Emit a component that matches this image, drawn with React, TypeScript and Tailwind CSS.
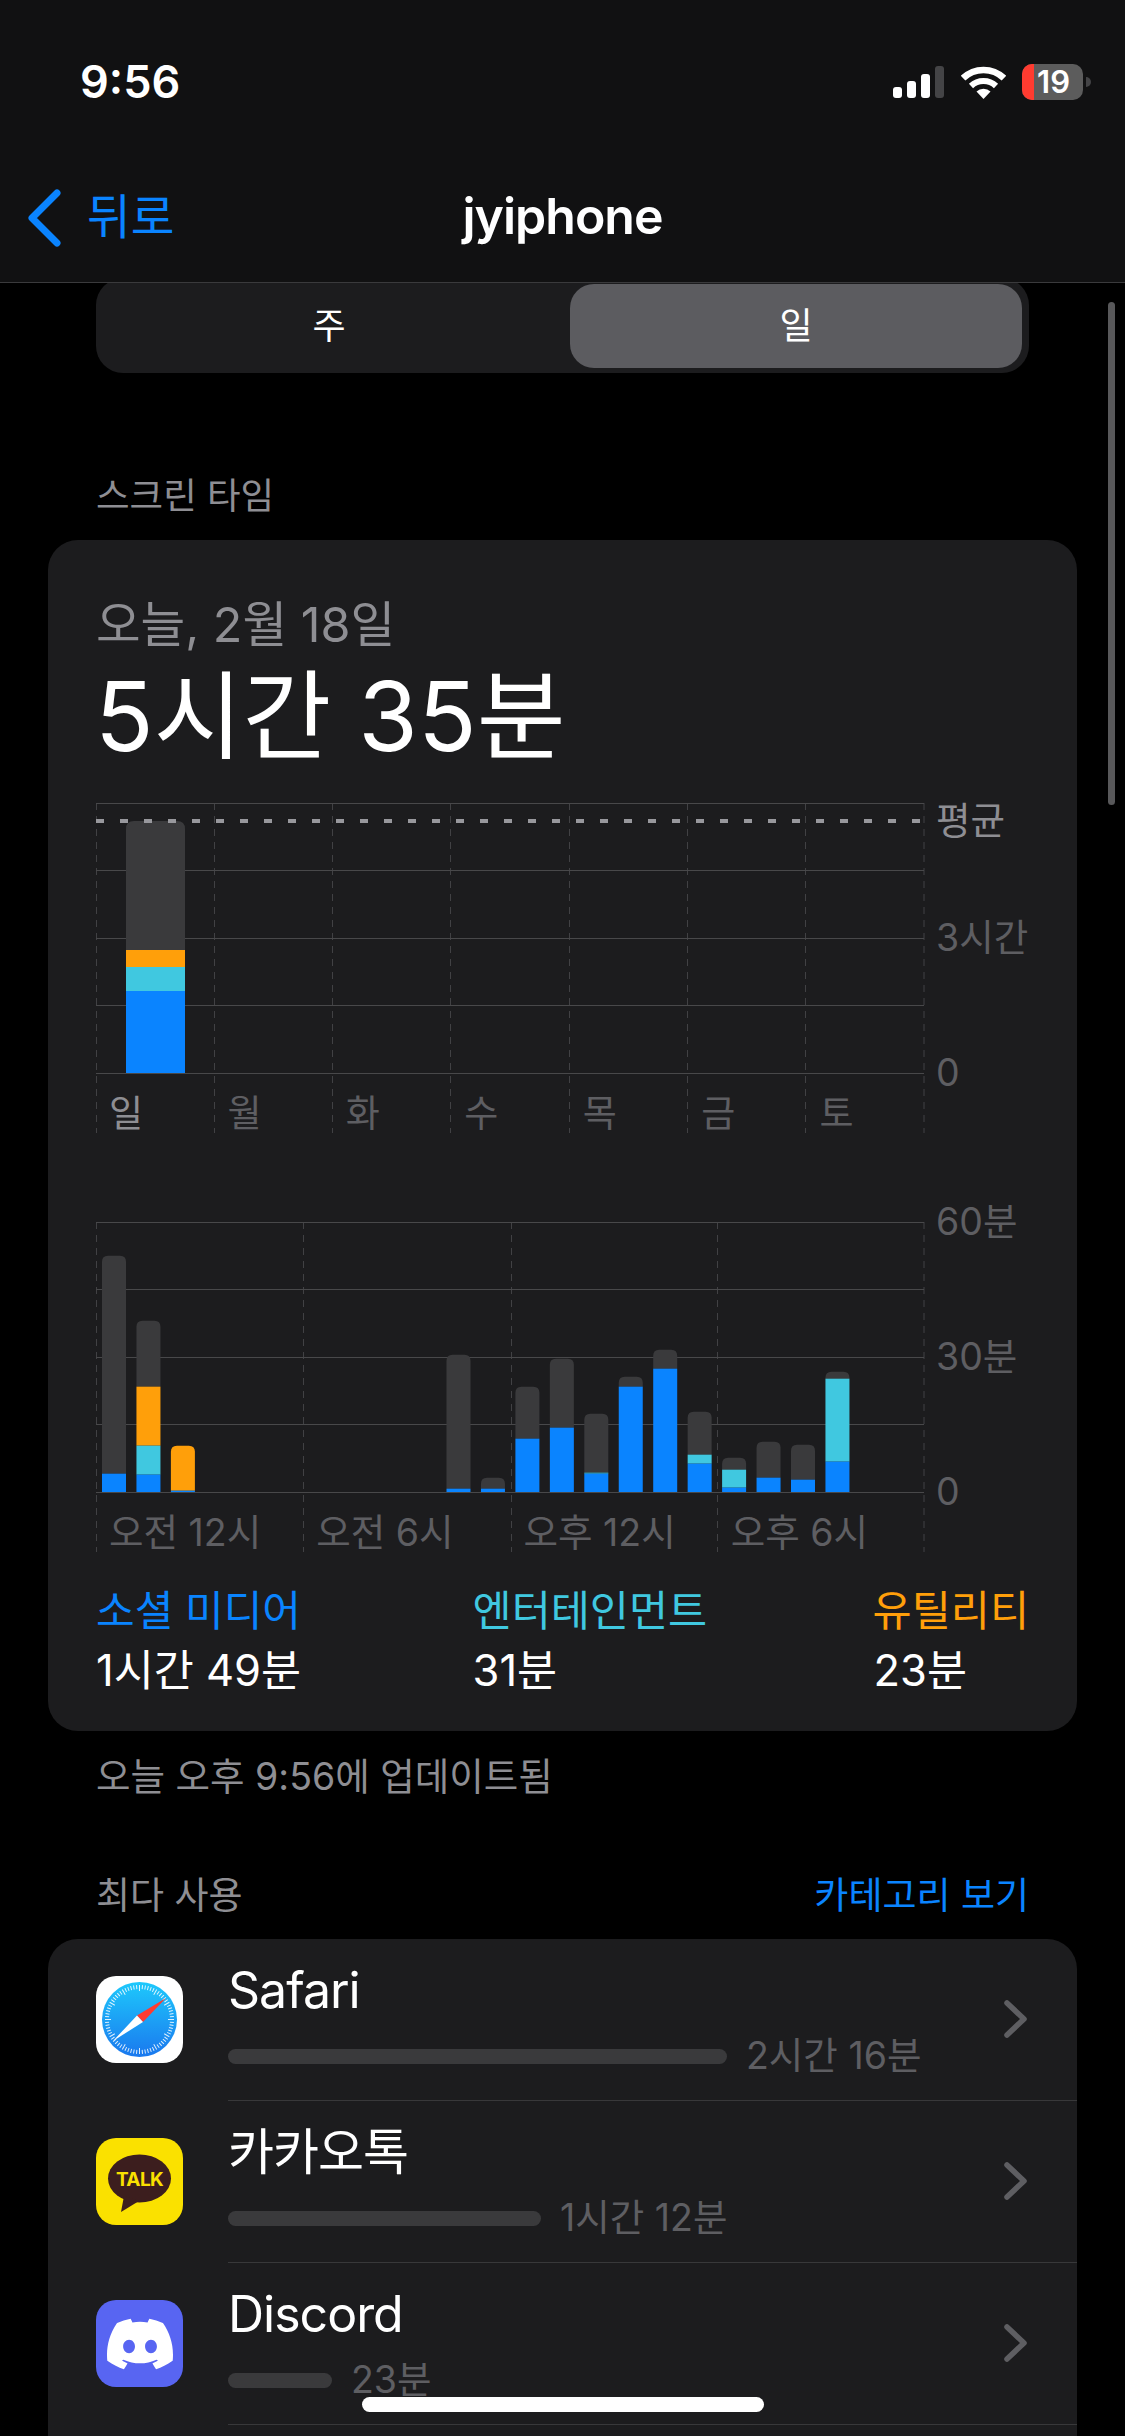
import { SiDiscord } from "react-icons/si";

const GRID = "#48484a";
const DASH = "#414144";
const C = { grey: "#3a3a3c", blue: "#0a84ff", teal: "#40c8e0", orange: "#ff9f0a" };

type Seg = [string, number];

function Stack({ x, w, base, segs, r }: { x: number; w: number; base: number; segs: Seg[]; r: number }) {
  // segs are listed from the top: [colour, y of the top of that segment]
  return (
    <g>
      {segs.map(([color, top], i) => {
        const bottom = i + 1 < segs.length ? segs[i + 1][1] : base;
        if (i === 0) {
          const rr = Math.min(r, bottom - top);
          return (
            <path
              key={i}
              fill={color}
              d={`M${x} ${bottom}V${top + rr}Q${x} ${top} ${x + rr} ${top}H${x + w - rr}Q${x + w} ${top} ${x + w} ${top + rr}V${bottom}Z`}
            />
          );
        }
        return <rect key={i} x={x} y={top} width={w} height={bottom - top} fill={color} />;
      })}
    </g>
  );
}

function Plot({ verticals, children }: { verticals: number[]; children?: React.ReactNode }) {
  return (
    <svg className="absolute inset-0" width="829" height="330" viewBox="0 0 829 330">
      {verticals.map((x) => (
        <line key={x} x1={x} x2={x} y1="0" y2="330" stroke={DASH} strokeWidth="1" strokeDasharray="7 6" />
      ))}
      {[0.5, 67.5, 135.5, 202.5, 270.5].map((y) => (
        <line key={y} x1="0" x2="828" y1={y} y2={y} stroke={GRID} strokeWidth="1" />
      ))}
      {children}
    </svg>
  );
}

const HOURS: [number, [string, number][]][] = [
  [0, [[C.grey, 198], [C.blue, 852]]],
  [1, [[C.grey, 393], [C.orange, 591], [C.teal, 768], [C.blue, 855]]],
  [2, [[C.orange, 768], [C.blue, 903]]],
  [10, [[C.grey, 495], [C.blue, 897]]],
  [11, [[C.grey, 864], [C.blue, 897]]],
  [12, [[C.grey, 591], [C.blue, 747]]],
  [13, [[C.grey, 507], [C.blue, 714]]],
  [14, [[C.grey, 672], [C.teal, 849], [C.blue, 852]]],
  [15, [[C.grey, 561], [C.blue, 591]]],
  [16, [[C.grey, 480], [C.blue, 537]]],
  [17, [[C.grey, 666], [C.teal, 795], [C.blue, 822]]],
  [18, [[C.grey, 804], [C.teal, 840], [C.blue, 894]]],
  [19, [[C.grey, 756], [C.blue, 864]]],
  [20, [[C.grey, 765], [C.blue, 870]]],
  [21, [[C.grey, 546], [C.teal, 567], [C.blue, 816]]],
];

function SafariIcon() {
  const ticks = Array.from({ length: 72 }, (_, i) => (i * 360) / 72);
  return (
    <svg width="87" height="87" viewBox="0 0 87 87">
      <defs>
        <linearGradient id="saf" x1="0" y1="0" x2="0" y2="1">
          <stop offset="0" stopColor="#1ec9fc" />
          <stop offset="1" stopColor="#1a78ee" />
        </linearGradient>
      </defs>
      <rect width="87" height="87" rx="20" fill="#fff" />
      <circle cx="43.5" cy="43.5" r="37.5" fill="url(#saf)" />
      {ticks.map((a) => (
        <line
          key={a}
          x1="43.5"
          x2="43.5"
          y1="9"
          y2={a % 30 === 0 ? 15 : 13}
          stroke="#fff"
          strokeOpacity="0.85"
          strokeWidth="1"
          transform={`rotate(${a} 43.5 43.5)`}
        />
      ))}
      <polygon points="70,22 47,46 41,39.5" fill="#ff3b30" />
      <polygon points="17,65 41,39.5 47,46" fill="#fff" />
    </svg>
  );
}

function KakaoIcon() {
  return (
    <svg width="87" height="87" viewBox="0 0 87 87">
      <rect width="87" height="87" rx="20" fill="#fae100" />
      <ellipse cx="43.5" cy="40.5" rx="31.5" ry="24" fill="#3c1e1e" />
      <polygon points="28,58 25,74 43,63" fill="#3c1e1e" />
      <text x="43.5" y="47.5" textAnchor="middle" fontSize="19" fontWeight="700" fill="#fae100" fontFamily="Inter" letterSpacing="-0.6">
        TALK
      </text>
    </svg>
  );
}

function DiscordIcon() {
  return (
    <div className="w-[87px] h-[87px] rounded-[20px] bg-[#5865f2] flex items-center justify-center text-white">
      <SiDiscord size={66} />
    </div>
  );
}

function Chevron() {
  return (
    <svg width="23" height="38" viewBox="0 0 23 38" className="shrink-0">
      <polyline points="3,3 20,19 3,35" fill="none" stroke="#5e5e62" strokeWidth="5.5" strokeLinecap="round" strokeLinejoin="round" />
    </svg>
  );
}

function AppRow({ icon, name, bar, time }: { icon: React.ReactNode; name: string; bar: string; time: string }) {
  return (
    <div className="flex h-[162px] pl-[48px]">
      <div className="pt-[37px] shrink-0">{icon}</div>
      <div className="flex flex-1 ml-[45px] border-b border-[#38383a] items-stretch">
        <div className="flex-1 pt-[21px]">
          <div className="text-[50px] leading-[60px] text-white tracking-[-0.02em]">{name}</div>
          <div className="flex items-center gap-[19px] mt-[16px]">
            <div className={`h-[15px] rounded-full bg-[#3a3a3c] ${bar}`} />
            <div className="text-[37.5px] leading-[40px] text-[#5e5e62]">{time}</div>
          </div>
        </div>
        <div className="flex items-center pr-[50px] pb-[1px]">
          <Chevron />
        </div>
      </div>
    </div>
  );
}

export default function App() {
  return (
    <div className="relative w-[1125px] h-[2436px] overflow-hidden bg-black flex flex-col font-['Inter','Noto_Sans_CJK_KR',sans-serif] text-white">
      {/* header */}
      <header className="relative z-10 h-[283px] shrink-0 bg-[#111112] border-b border-[#3a3a3c]">
        <div className="h-[164px] flex items-center justify-between pl-[80px] pr-[34px]">
          <div className="text-[45px] leading-[60px] font-semibold">9:56</div>
          <div className="flex items-center">
            <svg width="51" height="32" viewBox="0 0 51 32">
              <rect x="0" y="21" width="9" height="11" rx="3" fill="#fff" />
              <rect x="14" y="15" width="9" height="17" rx="3" fill="#fff" />
              <rect x="28" y="8" width="9" height="24" rx="3" fill="#fff" />
              <rect x="42" y="0" width="9" height="32" rx="3" fill="#444446" />
            </svg>
            <svg width="45" height="33" viewBox="0 0 45 33" className="ml-[17px]">
              <path d="M2.1 12.1 A29.5 29.5 0 0 1 42.9 12.1" fill="none" stroke="#fff" strokeWidth="6.5" />
              <path d="M10 20 A18 18 0 0 1 35 20" fill="none" stroke="#fff" strokeWidth="6" />
              <path d="M22.5 33 L15.5 25.5 A10 10 0 0 1 29.5 25.5 Z" fill="#fff" />
            </svg>
            <div className="relative ml-[16px] w-[61px] h-[36px] rounded-[10px] bg-[#5c5c5c] overflow-hidden flex items-center justify-center">
              <div className="absolute left-0 top-0 bottom-0 w-[12px] bg-[#ff3b30]" />
              <span className="relative text-[31px] leading-[36px] font-semibold pl-[2px]">19</span>
            </div>
            <div className="ml-[3px] w-[5px] h-[10px] rounded-r-full bg-[#444446]" />
          </div>
        </div>
        <div className="h-[104px] grid grid-cols-[1fr_auto_1fr] items-center">
          <div className="flex items-center pl-[27px] pt-[4px]">
            <svg width="34" height="58" viewBox="0 0 34 58">
              <polyline points="30,4 5,29 30,54" fill="none" stroke="#0a84ff" strokeWidth="7" strokeLinecap="round" strokeLinejoin="round" />
            </svg>
            <span className="ml-[26px] -mt-[2px] text-[47.5px] leading-[56px] text-[#0a84ff]">뒤로</span>
          </div>
          <div className="text-[50px] leading-[60px] font-semibold tracking-[-0.02em]">jyiphone</div>
          <div />
        </div>
      </header>

      {/* segmented control */}
      <div className="mx-[96px] -mt-[5px] h-[95px] rounded-[27px] bg-[#1c1c1e] flex items-center pl-[0px] pr-[7px] shrink-0">
        <div className="w-[474px] text-center text-[36px] leading-[44px] pr-[8px]">주</div>
        <div className="flex-1 h-[84px] rounded-[24px] bg-[#5c5c60] flex items-center justify-center text-[36px] leading-[44px]">일</div>
      </div>

      <div className="ml-[96px] mt-[103px] text-[36.5px] leading-[40px] text-[#8e8e93] shrink-0">스크린 타임</div>

      {/* main card */}
      <section className="mx-[48px] mt-[24px] rounded-[30px] bg-[#1c1c1e] px-[48px] pt-[57px] pb-[37px] shrink-0">
        <div className="text-[48.5px] leading-[56px] text-[#8e8e93]">오늘, 2월 18일</div>
        <div className="mt-[13px] text-[96.5px] leading-[100px] -ml-[1px]">5시간 35분</div>

        {/* week chart */}
        <div className="flex mt-[37px]">
          <div className="relative w-[829px] h-[330px]">
            <Plot verticals={[0.5, 118.5, 236.5, 354.5, 473.5, 591.5, 709.5, 828]}>
              <Stack x={30} w={59} base={270} r={8} segs={[[C.grey, 18], [C.orange, 147], [C.teal, 164], [C.blue, 188]]} />
              <line x1="0" x2="828" y1="18" y2="18" stroke="#98989d" strokeWidth="4" strokeDasharray="8 16" />
            </Plot>
            <div className="relative grid grid-cols-7 pt-[291px] text-[37px] leading-[40px] text-[#5e5e62]">
              <div className="pl-[13px] text-[#8e8e93]">일</div>
              <div className="pl-[13px]">월</div>
              <div className="pl-[13px]">화</div>
              <div className="pl-[13px]">수</div>
              <div className="pl-[13px]">목</div>
              <div className="pl-[13px]">금</div>
              <div className="pl-[13px]">토</div>
            </div>
          </div>
          <div className="pl-[11px] -mt-[2px] text-[37.5px] leading-[40px] text-[#5e5e62] whitespace-nowrap">
            <div className="text-[#8e8e93]">평균</div>
            <div className="mt-[77px]">3시간</div>
            <div className="mt-[95px]">0</div>
          </div>
        </div>

        {/* hour chart */}
        <div className="flex mt-[89px]">
          <div className="relative w-[829px] h-[330px]">
            <Plot verticals={[0.5, 207.5, 415.5, 621.5, 828]}>
              {HOURS.map(([i, segs]) => (
                <Stack
                  key={i}
                  x={6 + 34.45 * i}
                  w={24}
                  base={270}
                  r={6}
                  segs={segs.map(([c, t]) => [c, (t - 97) / 3] as Seg)}
                />
              ))}
            </Plot>
            <div className="relative grid grid-cols-4 pt-[291px] text-[37.5px] leading-[40px] text-[#5e5e62] whitespace-nowrap">
              <div className="pl-[13px]">오전 12시</div>
              <div className="pl-[13px]">오전 6시</div>
              <div className="pl-[13px]">오후 12시</div>
              <div className="pl-[13px]">오후 6시</div>
            </div>
          </div>
          <div className="pl-[11px] -mt-[20px] text-[37.5px] leading-[40px] text-[#5e5e62] whitespace-nowrap">
            <div>60분</div>
            <div className="mt-[95px]">30분</div>
            <div className="mt-[95px]">0</div>
          </div>
        </div>

        {/* legend */}
        <div className="flex justify-between mt-[35px] leading-[48px]">
          <div>
            <div className="text-[42px] text-[#0a84ff]">소셜 미디어</div>
            <div className="mt-[11px] text-[43.5px]">1시간 49분</div>
          </div>
          <div className="ml-[6px]">
            <div className="text-[42.5px] text-[#40c8e0]">엔터테인먼트</div>
            <div className="mt-[11px] text-[43.5px]">31분</div>
          </div>
          <div>
            <div className="text-[42.5px] text-[#ff9f0a]">유틸리티</div>
            <div className="mt-[11px] text-[43.5px] pl-[1px]">23분</div>
          </div>
        </div>
      </section>

      <div className="ml-[96px] mt-[26px] text-[37.5px] leading-[40px] text-[#8e8e93] shrink-0">오늘 오후 9:56에 업데이트됨</div>

      <div className="mx-[96px] mt-[79px] flex justify-between text-[37px] leading-[40px] shrink-0">
        <span className="text-[#8e8e93]">최다 사용</span>
        <span className="text-[#0a84ff]">카테고리 보기</span>
      </div>

      {/* app list */}
      <section className="mx-[48px] mt-[23px] flex-1 rounded-t-[30px] bg-[#1c1c1e]">
        <AppRow icon={<SafariIcon />} name="Safari" bar="w-[499px]" time="2시간 16분" />
        <AppRow icon={<KakaoIcon />} name="카카오톡" bar="w-[313px]" time="1시간 12분" />
        <AppRow icon={<DiscordIcon />} name="Discord" bar="w-[104px]" time="23분" />
      </section>

      {/* scroll indicator and home bar */}
      <div className="absolute left-[1108px] top-[302px] w-[7px] h-[503px] rounded-full bg-[#58585a]" />
      <div className="absolute left-[362px] top-[2397px] w-[402px] h-[15px] rounded-full bg-white" />
    </div>
  );
}
